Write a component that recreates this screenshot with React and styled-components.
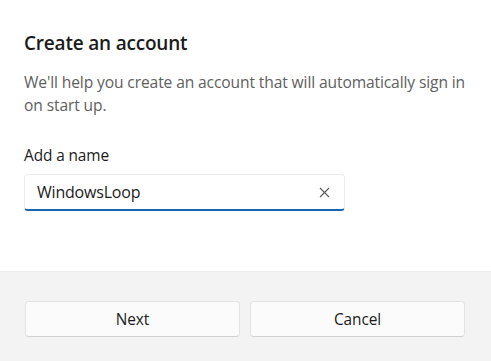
import React from "react";
import styled, { createGlobalStyle } from "styled-components";

const GlobalStyle = createGlobalStyle`
  html, body {
    margin: 0;
    padding: 0;
    background: #ffffff;
  }
  body {
    font-family: "Open Sans", "Noto Sans", "Liberation Sans", sans-serif;
  }
`;

const Dialog = styled.div`
  width: 491px;
  height: 361px;
  display: flex;
  flex-direction: column;
  background: #ffffff;
  overflow: hidden;
`;

const Body = styled.div`
  flex: 1;
  padding: 28px 20px 0 24px;
  display: flex;
  flex-direction: column;
`;

const Title = styled.h1`
  margin: 0;
  font-size: 19px;
  font-weight: 600;
  line-height: 30px;
  color: #1b1b1b;
  letter-spacing: -0.2px;
`;

const Description = styled.p`
  margin: 13px 0 0 0;
  font-size: 15.6px;
  line-height: 23px;
  color: #606060;
  letter-spacing: -0.12px;
`;

const Label = styled.label`
  margin-top: 28px;
  font-size: 15.4px;
  line-height: 22px;
  color: #1b1b1b;
  letter-spacing: -0.1px;
`;

const InputBox = styled.div`
  margin-top: 7px;
  width: 321px;
  height: 37px;
  box-sizing: border-box;
  display: flex;
  align-items: center;
  padding: 0 12px 0 12px;
  background: #ffffff;
  border: 1px solid #ececec;
  border-bottom: 2px solid #1a64b4;
  border-radius: 4px;
`;

const Input = styled.input`
  flex: 1;
  border: none;
  outline: none;
  background: transparent;
  font-family: inherit;
  font-size: 16px;
  color: #1b1b1b;
  padding: 0;
  letter-spacing: -0.2px;
`;

const ClearButton = styled.span`
  display: flex;
  align-items: center;
  justify-content: center;
  width: 16px;
  height: 16px;
`;

const Footer = styled.div`
  height: 90px;
  background: #f3f3f3;
  border-top: 1px solid #ebebeb;
  box-sizing: border-box;
  display: grid;
  grid-template-columns: 1fr 1fr;
  gap: 10px;
  padding: 29px 26px 0 25px;
`;

const Button = styled.button`
  height: 36px;
  box-sizing: border-box;
  background: #fbfbfb;
  border: 1px solid #e3e3e3;
  border-bottom-color: #d0d0d0;
  border-radius: 4px;
  font-family: inherit;
  font-size: 15.4px;
  color: #1b1b1b;
  letter-spacing: -0.1px;
`;

export default function App() {
  return (
    <>
      <GlobalStyle />
      <Dialog>
        <Body>
          <Title>Create an account</Title>
          <Description>
            We'll help you create an account that will automatically sign in
            on start up.
          </Description>
          <Label>Add a name</Label>
          <InputBox>
            <Input defaultValue="WindowsLoop" />
            <ClearButton>
              <svg width="11" height="11" viewBox="0 0 11 11">
                <path d="M1 1L10 10M10 1L1 10" stroke="#5a5a5a" strokeWidth="1.1" fill="none" />
              </svg>
            </ClearButton>
          </InputBox>
        </Body>
        <Footer>
          <Button>Next</Button>
          <Button>Cancel</Button>
        </Footer>
      </Dialog>
    </>
  );
}
